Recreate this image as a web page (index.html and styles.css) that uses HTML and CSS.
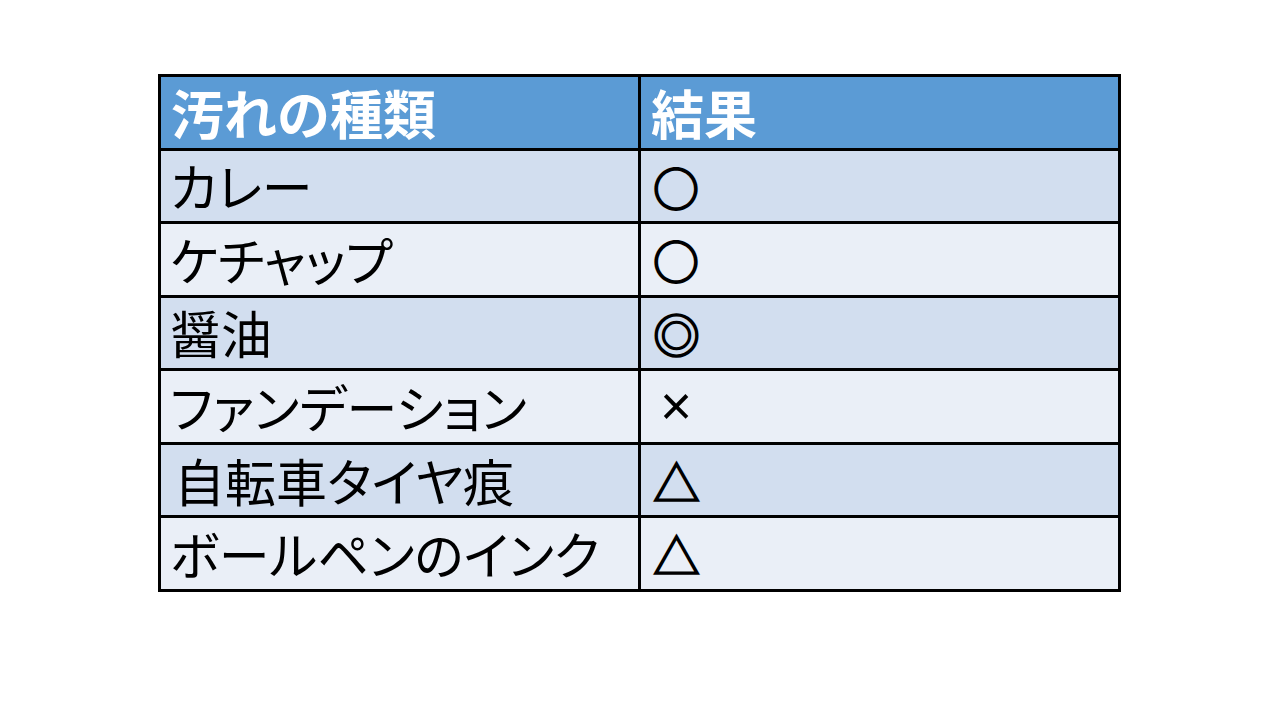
FILE: index.html
```html
<!DOCTYPE html>
<html lang="ja">
<head>
<meta charset="utf-8">
<link rel="stylesheet" href="styles.css">
</head>
<body>
<div class="page">
  <div class="table">
    <div class="cell head">汚れの種類</div>
    <div class="cell head">結果</div>
    <div class="cell odd">カレー</div>
    <div class="cell odd sym">〇</div>
    <div class="cell even">ケチャップ</div>
    <div class="cell even sym">〇</div>
    <div class="cell odd">醤油</div>
    <div class="cell odd sym heavy">◎</div>
    <div class="cell even">ファンデーション</div>
    <div class="cell even sym cross">×</div>
    <div class="cell odd indent">自転車タイヤ痕</div>
    <div class="cell odd sym heavy">△</div>
    <div class="cell even">ボールペンのインク</div>
    <div class="cell even sym heavy">△</div>
  </div>
</div>
</body>
</html>
```

FILE: styles.css
```css
html, body {
  margin: 0;
  padding: 0;
  background: #ffffff;
}
.page {
  width: 1280px;
  height: 720px;
  padding-top: 74px;
  padding-left: 158px;
  box-sizing: border-box;
}
.table {
  display: grid;
  grid-template-columns: 477px 477px;
  grid-template-rows: repeat(7, 70.57px);
  gap: 3px;
  padding: 3px;
  background: #000000;
  width: 963px;
  box-sizing: border-box;
}
.cell {
  display: flex;
  align-items: center;
  padding-left: 9px;
  font-family: "Noto Sans CJK JP", "Noto Sans", sans-serif;
  font-size: 51px;
  font-feature-settings: "palt" 1;
  color: #000000;
  line-height: 1;
  white-space: nowrap;
}
.head {
  background: #5b9bd5;
  color: #ffffff;
  font-weight: 700;
  font-size: 53px;
  font-feature-settings: normal;
  padding-left: 10px;
}
.odd {
  background: #d2deef;
}
.even {
  background: #eaeff7;
}
.indent {
  padding-left: 13px;
}
.sym {
  padding-left: 11px;
  font-size: 48px;
  font-feature-settings: normal;
}
.heavy {
  font-size: 47px;
  padding-left: 12px;
  -webkit-text-stroke: 1.6px #000000;
}
.cross {
  font-family: "Liberation Sans", sans-serif;
  font-size: 55px;
  padding-left: 19px;
}
```
